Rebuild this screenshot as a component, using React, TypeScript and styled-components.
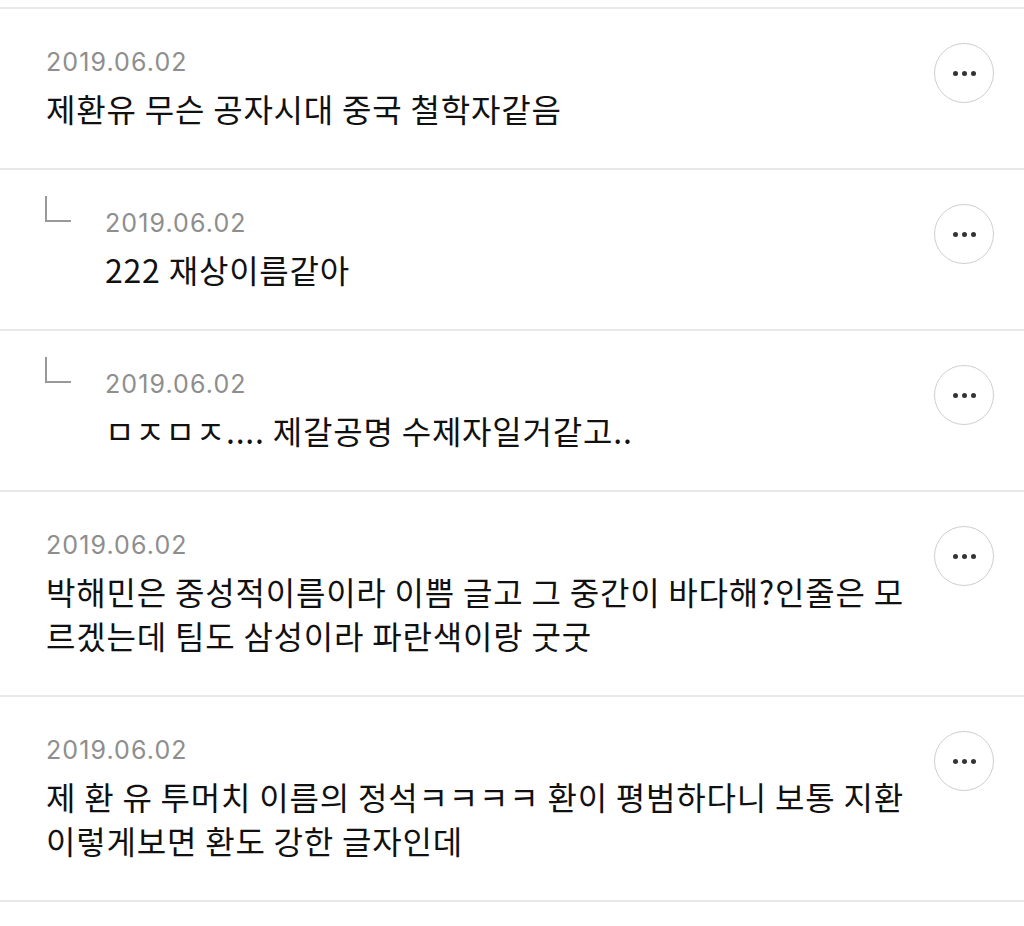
import styled, { createGlobalStyle } from 'styled-components';

type Comment = {
  date: string;
  text: string;
  reply?: boolean;
};

const comments: Comment[] = [
  { date: '2019.06.02', text: '제환유 무슨 공자시대 중국 철학자같음' },
  { date: '2019.06.02', text: '222 재상이름같아', reply: true },
  { date: '2019.06.02', text: 'ㅁㅈㅁㅈ.... 제갈공명 수제자일거같고..', reply: true },
  {
    date: '2019.06.02',
    text: '박해민은 중성적이름이라 이쁨 글고 그 중간이 바다해?인줄은 모르겠는데 팀도 삼성이라 파란색이랑 굿굿',
  },
  {
    date: '2019.06.02',
    text: '제 환 유 투머치 이름의 정석ㅋㅋㅋㅋ 환이 평범하다니 보통 지환 이렇게보면 환도 강한 글자인데',
  },
];

const GlobalStyle = createGlobalStyle`
  body {
    margin: 0;
    background: #ffffff;
    font-family: "Noto Sans CJK KR", "Noto Sans", sans-serif;
  }
`;

export default function App() {
  return (
    <>
      <GlobalStyle />
      <List>
        {comments.map((c, i) => (
          <Item key={i} $reply={c.reply}>
            {c.reply && (
              <ReplyMark>
                <svg width="28" height="28" viewBox="0 0 28 28">
                  <path d="M2 0 V25 H27" fill="none" stroke="#999999" strokeWidth="2" />
                </svg>
              </ReplyMark>
            )}
            <Body>
              <Date>{c.date}</Date>
              <Text>{c.text}</Text>
            </Body>
            <MoreButton aria-label="more">
              <Dot />
              <Dot />
              <Dot />
            </MoreButton>
          </Item>
        ))}
      </List>
    </>
  );
}

const List = styled.ul`
  list-style: none;
  margin: 0;
  padding: 7px 0 0 0;
`;

const Item = styled.li<{ $reply?: boolean }>`
  display: flex;
  align-items: flex-start;
  border-top: 2px solid #e8e8e8;
  padding: 0 30px 38px ${(p) => (p.$reply ? '44px' : '46px')};

  &:last-child {
    border-bottom: 2px solid #e8e8e8;
  }
`;

const ReplyMark = styled.div`
  width: 61px;
  flex-shrink: 0;
  padding-top: 26px;
  line-height: 0;
`;

const Body = styled.div`
  flex: 1;
  min-width: 0;
  padding-top: 37px;
  padding-right: 18px;
`;

const Date = styled.div`
  font-family: Inter, "Liberation Sans", sans-serif;
  font-size: 25px;
  line-height: 32px;
  color: #8e8e8e;
  letter-spacing: 1.1px;
`;

const Text = styled.p`
  margin: 8px 0 0 0;
  font-family: "Noto Sans CJK KR", sans-serif;
  font-size: 32px;
  line-height: 44px;
  letter-spacing: 0.8px;
  color: #111111;
`;

const MoreButton = styled.button`
  flex-shrink: 0;
  width: 60px;
  height: 60px;
  margin-top: 34px;
  border-radius: 50%;
  border: 1.5px solid #cfcfcf;
  background: #ffffff;
  display: flex;
  align-items: center;
  justify-content: center;
  gap: 4px;
  padding: 0;
`;

const Dot = styled.span`
  width: 5px;
  height: 5px;
  border-radius: 50%;
  background: #333333;
`;
